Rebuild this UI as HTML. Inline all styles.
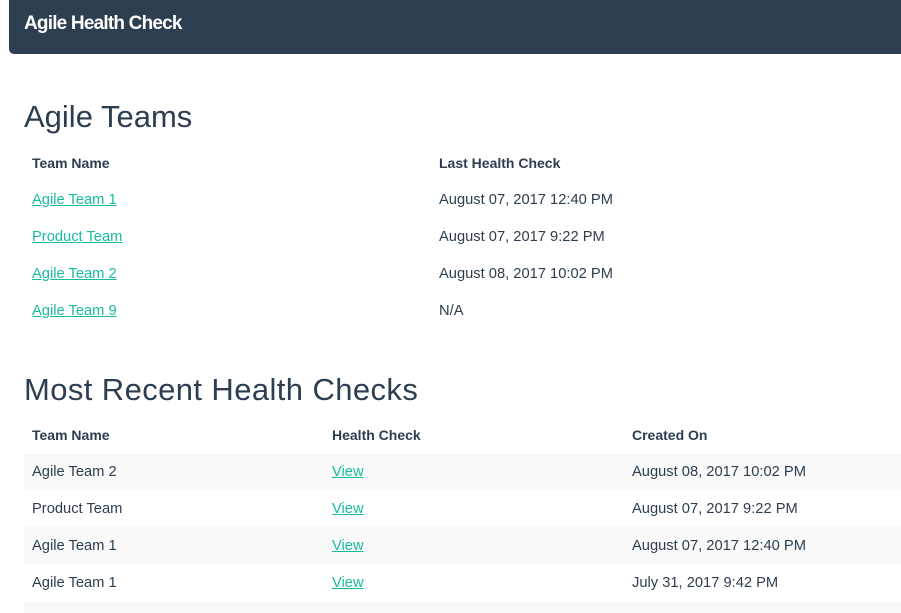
<!DOCTYPE html>
<html><head><style>
html,body{margin:0;width:901px;height:613px;overflow:hidden}
body{background:#fff;font-family:"Liberation Sans",sans-serif;color:#2c3e50;position:relative}
.nav{position:absolute;left:9px;top:0;width:892px;height:54px;background:#2c3e50;border-radius:0 0 0 5px}
.nav span{position:absolute;left:15px;top:13px;color:#fff;font-size:19px;font-weight:bold;letter-spacing:-0.8px}
.t{position:absolute;font-size:14.7px;white-space:nowrap;line-height:18px}
.b{font-weight:bold;font-size:14px}
a{color:#18bc9c;text-decoration:underline}
h1{position:absolute;margin:0;font-weight:normal;font-size:31px;left:24px;white-space:nowrap}
.s{position:absolute;left:24px;width:877px;height:37px;background:#f9f9f9}
</style></head><body>
<div class="nav"><span>Agile Health Check</span></div>
<h1 style="top:99px">Agile Teams</h1>
<div class="t b" style="left:32px;top:154px">Team Name</div>
<div class="t b" style="left:439px;top:154px">Last Health Check</div>
<div class="t" style="left:32px;top:191px"><a>Agile Team 1</a></div>
<div class="t" style="left:439px;top:191px">August 07, 2017 12:40 PM</div>
<div class="t" style="left:32px;top:228px"><a>Product Team</a></div>
<div class="t" style="left:439px;top:228px">August 07, 2017 9:22 PM</div>
<div class="t" style="left:32px;top:265px"><a>Agile Team 2</a></div>
<div class="t" style="left:439px;top:265px">August 08, 2017 10:02 PM</div>
<div class="t" style="left:32px;top:302px"><a>Agile Team 9</a></div>
<div class="t" style="left:439px;top:302px">N/A</div>
<h1 style="top:372px;letter-spacing:0.4px">Most Recent Health Checks</h1>
<div class="s" style="top:453px"></div>
<div class="s" style="top:527px"></div>
<div class="s" style="top:601px"></div>
<div class="t b" style="left:32px;top:426px">Team Name</div>
<div class="t b" style="left:332px;top:426px">Health Check</div>
<div class="t b" style="left:632px;top:426px">Created On</div>
<div class="t" style="left:32px;top:463px">Agile Team 2</div>
<div class="t" style="left:332px;top:463px"><a>View</a></div>
<div class="t" style="left:632px;top:463px">August 08, 2017 10:02 PM</div>
<div class="t" style="left:32px;top:500px">Product Team</div>
<div class="t" style="left:332px;top:500px"><a>View</a></div>
<div class="t" style="left:632px;top:500px">August 07, 2017 9:22 PM</div>
<div class="t" style="left:32px;top:537px">Agile Team 1</div>
<div class="t" style="left:332px;top:537px"><a>View</a></div>
<div class="t" style="left:632px;top:537px">August 07, 2017 12:40 PM</div>
<div class="t" style="left:32px;top:574px">Agile Team 1</div>
<div class="t" style="left:332px;top:574px"><a>View</a></div>
<div class="t" style="left:632px;top:574px">July 31, 2017 9:42 PM</div>
</body></html>
